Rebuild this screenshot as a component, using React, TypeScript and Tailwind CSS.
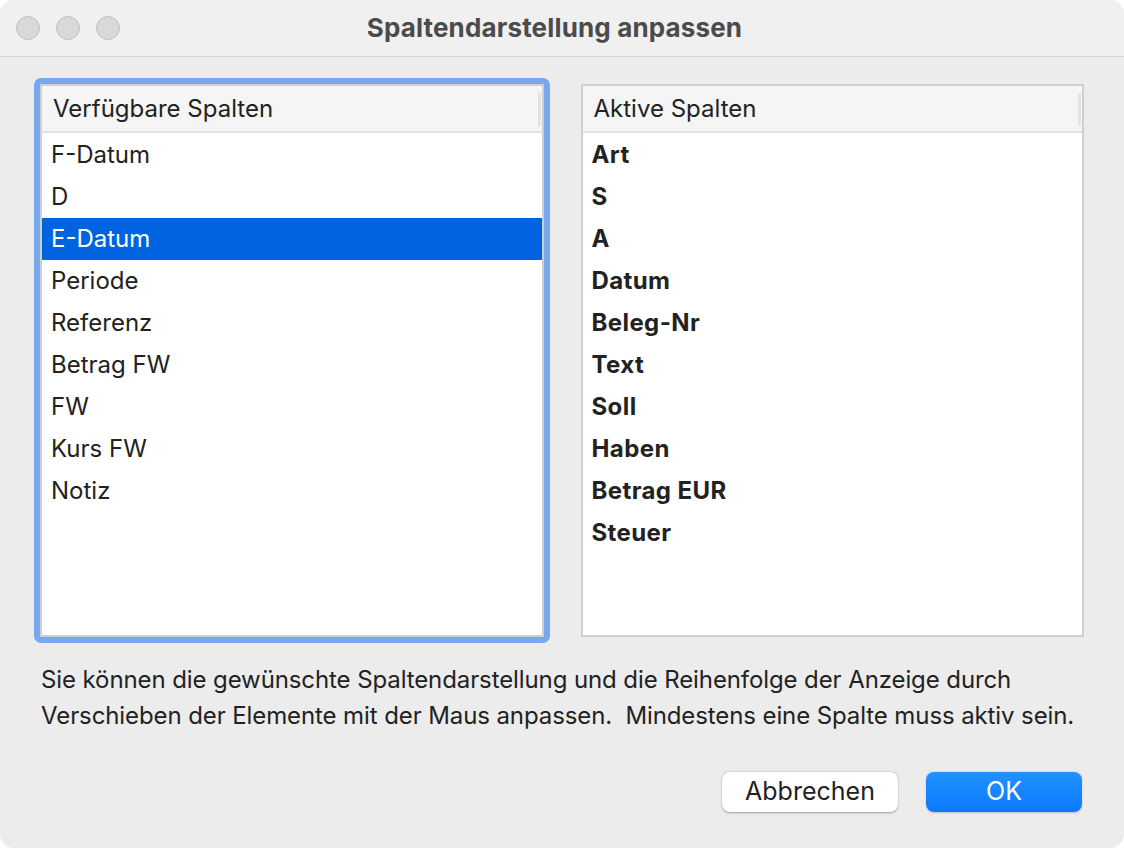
import React from 'react';

const AVAILABLE = ['F-Datum', 'D', 'E-Datum', 'Periode', 'Referenz', 'Betrag FW', 'FW', 'Kurs FW', 'Notiz'];
const ACTIVE = ['Art', 'S', 'A', 'Datum', 'Beleg-Nr', 'Text', 'Soll', 'Haben', 'Betrag EUR', 'Steuer'];

const font = { fontFamily: 'Inter, "Noto Sans", sans-serif' };

function ListBox({ title, items, selected, bold, focused }: { title: string; items: string[]; selected?: string; bold?: boolean; focused?: boolean }) {
  return (
    <div className={`relative flex-1 bg-white border-2 border-[#cfcfcf] ${focused ? 'outline-[6px] outline-solid outline-[#76a9ee] rounded-[1px]' : ''}`}>
      <div className="h-[47px] bg-[#f4f5f4] border-b-2 border-[#e2e2e2] flex items-center pl-[11px] relative">
        <span className="text-[24px] text-[#222]">{title}</span>
        <div className="absolute right-[1px] top-[7px] h-[33px] w-[3px] bg-[#e3e3e3]" />
      </div>
      <div className="pt-px">
        {items.map(it => (
          <div key={it} className={`h-[42px] flex items-center pl-[9px] text-[24px] ${it === selected ? 'bg-[#0064e1] text-white' : 'text-[#222]'} ${bold ? 'font-bold tracking-[0.4px]' : ''}`}>
            {it}
          </div>
        ))}
      </div>
    </div>
  );
}

export default function App() {
  return (
    <div className="w-[1124px] h-[848px] bg-white" style={font}>
      <div className="w-full h-full rounded-[14px] overflow-hidden bg-[#ececec] flex flex-col">
        <div className="h-[57px] bg-[#f0f0f0] border-b border-[#d3d3d3] flex items-center relative shrink-0">
          <div className="flex gap-[16px] pl-[16px]">
            {[0, 1, 2].map(i => (
              <div key={i} className="w-[24px] h-[24px] rounded-full bg-[#d9d9d9] border border-[#bfbfbf]" />
            ))}
          </div>
          <div className="absolute inset-0 flex items-center justify-center pr-[15px] pb-[2px]">
            <span className="text-[26px] font-bold text-[#4b4b4b] tracking-[0.15px]">Spaltendarstellung anpassen</span>
          </div>
        </div>
        <div className="flex-1 flex flex-col pl-[40px] pr-[40px] pt-[27px]">
          <div className="flex gap-[37px] h-[553px]">
            <ListBox title="Verfügbare Spalten" items={AVAILABLE} selected="E-Datum" focused />
            <ListBox title="Aktive Spalten" items={ACTIVE} bold />
          </div>
          <p className="mt-[25px] text-[24px] leading-[36px] text-[#222] pl-px whitespace-nowrap tracking-[-0.1px]">
            Sie können die gewünschte Spaltendarstellung und die Reihenfolge der Anzeige durch<br />
            Verschieben der Elemente mit der Maus anpassen.&nbsp; Mindestens eine Spalte muss aktiv sein.
          </p>
          <div className="flex justify-end gap-[28px] mt-[38px] pr-[2px]">
            <button className="w-[176px] h-[40px] rounded-[8px] bg-white text-[25px] text-[#222] shadow-[0_0.5px_2px_rgba(0,0,0,0.35)]">Abbrechen</button>
            <button className="w-[156px] h-[40px] rounded-[8px] bg-gradient-to-b from-[#2192ff] to-[#0a7aff] text-[25px] text-white shadow-[0_0.5px_2px_rgba(0,0,0,0.2)]">OK</button>
          </div>
        </div>
      </div>
    </div>
  );
}
